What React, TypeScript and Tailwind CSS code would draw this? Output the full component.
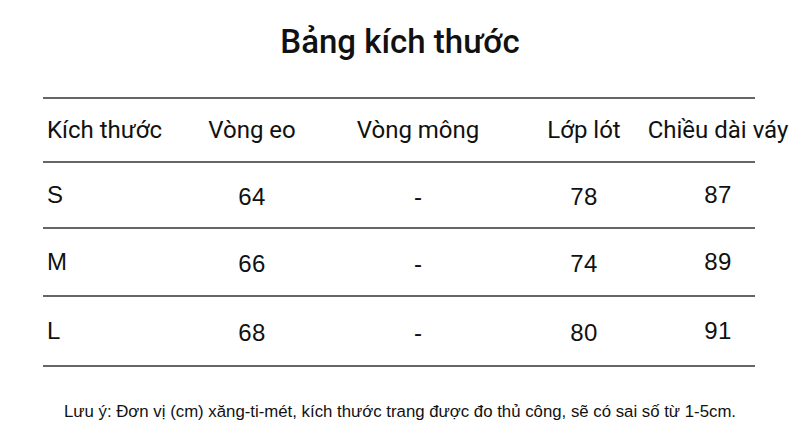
const rows = [
  { size: 'S', waist: '64', hip: '-', lining: '78', length: '87', h: 'h-[66px]' },
  { size: 'M', waist: '66', hip: '-', lining: '74', length: '89', h: 'h-[68px]' },
  { size: 'L', waist: '68', hip: '-', lining: '80', length: '91', h: 'h-[70px]' },
];

const grid = 'grid grid-cols-[147px_124px_208px_124px_109px] items-center border-b-2 border-[#666]';

export default function App() {
  return (
    <div className="w-[800px] h-[446px] bg-white text-[#111] overflow-hidden">
      {/* Title */}
      <h1 className="pt-[26px] text-center text-[33px] leading-[32px] font-medium font-['Roboto',sans-serif]">
        Bảng kích thước
      </h1>

      {/* Table */}
      <div className="mt-[39px] ml-[43px] w-[712px] border-t-2 border-[#666]">
        <div className={`${grid} h-[64px] text-[24px] font-['Roboto',sans-serif]`}>
          <div className="pl-1 whitespace-nowrap">Kích thước</div>
          <div className="flex justify-center whitespace-nowrap">Vòng eo</div>
          <div className="flex justify-center whitespace-nowrap">Vòng mông</div>
          <div className="flex justify-center whitespace-nowrap">Lớp lót</div>
          <div className="flex justify-center pl-[35px] whitespace-nowrap">Chiều dài váy</div>
        </div>

        {rows.map((r) => (
          <div key={r.size} className={`${grid} ${r.h} text-[24px] font-['Liberation_Sans',Arial,sans-serif]`}>
            <div className="pl-1">{r.size}</div>
            <div className="flex justify-center pt-1 tracking-[0.5px]">{r.waist}</div>
            <div className="flex justify-center pt-1">{r.hip}</div>
            <div className="flex justify-center pt-1 tracking-[0.5px]">{r.lining}</div>
            <div className="flex justify-center pl-[35px] tracking-[0.5px]">{r.length}</div>
          </div>
        ))}
      </div>

      {/* Note */}
      <p className="mt-[37px] text-center text-[16.8px] leading-[16px] font-['Liberation_Sans',Arial,sans-serif]">
        Lưu ý: Đơn vị (cm) xăng-ti-mét, kích thước trang được đo thủ công, sẽ có sai số từ 1-5cm.
      </p>
    </div>
  );
}
